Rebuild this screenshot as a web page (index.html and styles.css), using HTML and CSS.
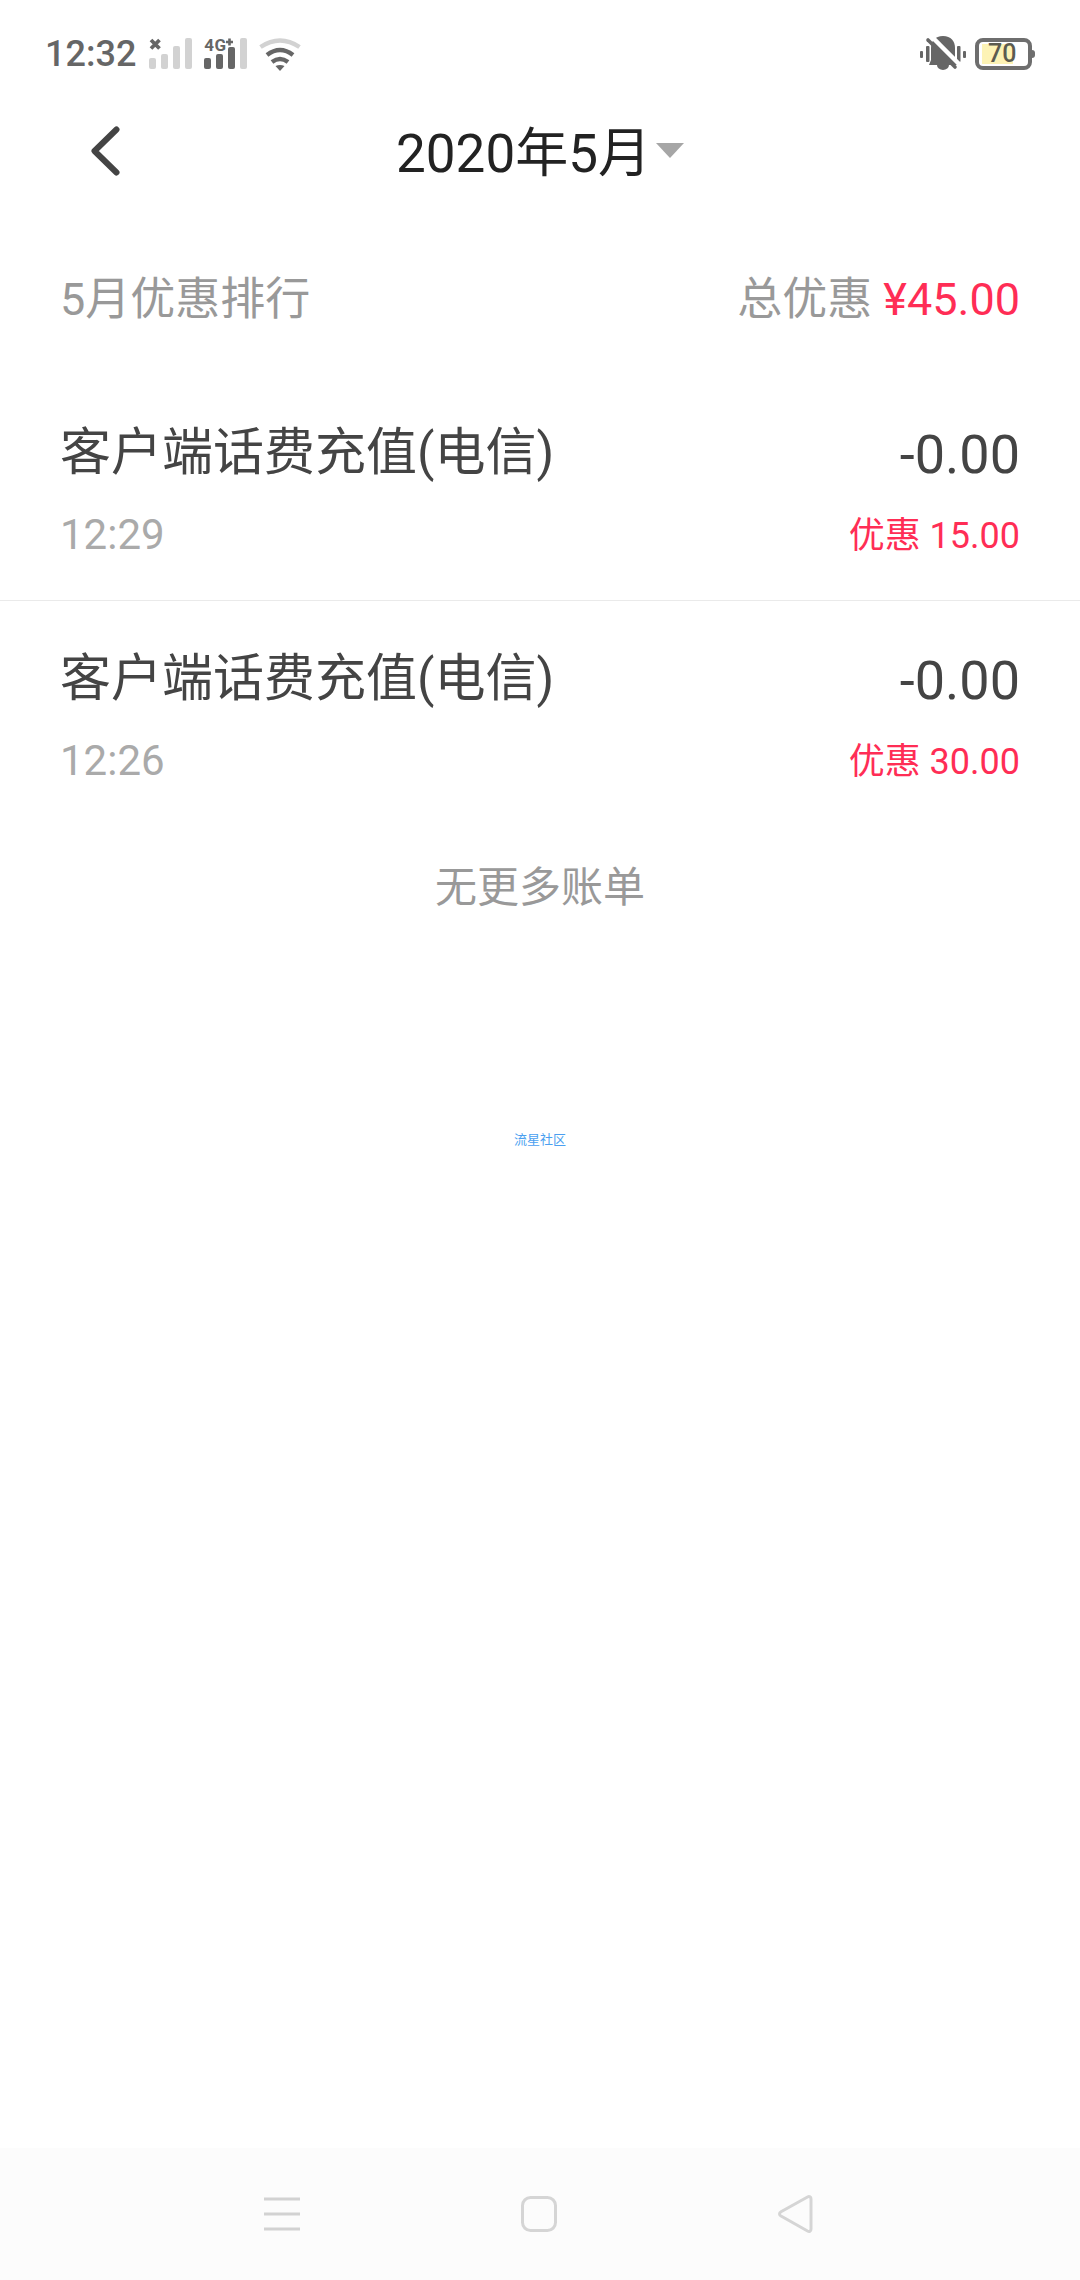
FILE: index.html
```html
<!DOCTYPE html>
<html lang="zh-CN">
<head>
  <meta charset="UTF-8">
  <meta name="viewport" content="width=device-width, initial-scale=1.0">
  <title>2020年5月</title>
  <link rel="stylesheet" href="styles.css">
</head>
<body>
  <div class="page">
    <div class="status-bar">
      <div class="status-left">
        <span class="status-time">12:32</span>
        <svg class="sig-one" width="46" height="32" viewBox="0 0 46 32">
          <path d="M2 2l8.500 8.500M10.500 2L2 10.500" stroke="#666" stroke-width="3.800" fill="none"/>
          <rect x="0" y="20" width="7" height="11" rx="2" fill="#d2d2d2"/>
          <rect x="12" y="16" width="7" height="15" rx="2" fill="#d2d2d2"/>
          <rect x="24" y="8" width="7" height="23" rx="2" fill="#d2d2d2"/>
          <rect x="36" y="0" width="7" height="31" rx="2" fill="#d2d2d2"/>
        </svg>
        <div class="sig-two">
          <span class="sig-label">4G</span>
          <svg width="46" height="32" viewBox="0 0 46 32">
            <path d="M22 4h7M25.500 0.500v7" stroke="#666" stroke-width="2.600"/>
            <rect x="0" y="20" width="7" height="11" rx="2" fill="#666"/>
            <rect x="12" y="16" width="7" height="15" rx="2" fill="#666"/>
            <rect x="24" y="9" width="7" height="22" rx="2" fill="#666"/>
            <rect x="36" y="0" width="7" height="31" rx="2" fill="#d2d2d2"/>
          </svg>
        </div>
        <svg class="wifi" width="42" height="34" viewBox="0 0 42 34">
          <path d="M1.500 10Q21-3 40.500 10" stroke="#d2d2d2" stroke-width="4.500" fill="none"/>
          <path d="M8 18Q21 8 34 18" stroke="#666" stroke-width="4.500" fill="none"/>
          <path d="M13 25Q21 19 29 25" stroke="#666" stroke-width="4.500" fill="none"/>
          <path d="M16.500 29Q21 27 25.500 29L21 34Z" fill="#666"/>
        </svg>
      </div>
      <div class="status-right">
        <svg width="46" height="36" viewBox="0 0 46 36">
          <rect x="0" y="15" width="3" height="7" rx="1" fill="#666"/>
          <rect x="6" y="10" width="3.500" height="16" rx="1" fill="#666"/>
          <rect x="37" y="10" width="3.500" height="16" rx="1" fill="#666"/>
          <rect x="43" y="15" width="3" height="7" rx="1" fill="#666"/>
          <path d="M23 0c8 0 12 5 12 12v12l2 5H9l2-5V12C11 5 15 0 23 0z" fill="#666"/>
          <path d="M17 29h12a6 5 0 0 1-12 0z" fill="#666"/>
          <path d="M11 0l29 29" stroke="#fff" stroke-width="4.500"/>
          <path d="M8 4l27 27" stroke="#666" stroke-width="3.600" stroke-linecap="round"/>
        </svg>
        <div class="battery">
          <div class="battery-body">
            <span class="battery-level">70</span>
          </div>
          <span class="battery-tip"></span>
        </div>
      </div>
    </div>

    <div class="title-bar">
      <svg class="back-icon" width="32" height="52" viewBox="0 0 32 52">
        <path d="M26.500 3.500L4.500 25l22 21.500" stroke="#444" stroke-width="6" fill="none" stroke-linecap="round" stroke-linejoin="round"/>
      </svg>
      <div class="month-picker">
        <span class="month-text">2020年5月</span>
        <span class="month-caret"></span>
      </div>
    </div>

    <div class="summary">
      <span class="summary-title">5月优惠排行</span>
      <span class="summary-total">总优惠 <em>¥45.00</em></span>
    </div>

    <div class="bill-list">
      <div class="bill-item">
        <div class="bill-row">
          <span class="bill-name">客户端话费充值(电信)</span>
          <span class="bill-amount">-0.00</span>
        </div>
        <div class="bill-row bill-sub">
          <span class="bill-time">12:29</span>
          <span class="bill-discount">优惠 15.00</span>
        </div>
      </div>
      <div class="bill-item">
        <div class="bill-row">
          <span class="bill-name">客户端话费充值(电信)</span>
          <span class="bill-amount">-0.00</span>
        </div>
        <div class="bill-row bill-sub">
          <span class="bill-time">12:26</span>
          <span class="bill-discount">优惠 30.00</span>
        </div>
      </div>
    </div>

    <div class="no-more">无更多账单</div>
    <div class="watermark">流星社区</div>

    <div class="nav-bar">
      <svg width="36" height="36" viewBox="0 0 36 36">
        <path d="M0 3h36M0 18h36M0 33h36" stroke="#d2d2d2" stroke-width="3"/>
      </svg>
      <svg width="36" height="36" viewBox="0 0 36 36">
        <rect x="1.500" y="1.500" width="33" height="33" rx="8" stroke="#d5d5d5" stroke-width="3" fill="none"/>
      </svg>
      <svg width="36" height="40" viewBox="0 0 36 40">
        <path d="M33 5v30c0 2-1.500 3-3.500 2L3 22c-2-1.200-2-3 0-4.200L29.500 3c2-1 3.500 0 3.500 2z" stroke="#d5d5d5" stroke-width="3" fill="none"/>
      </svg>
    </div>
  </div>
</body>
</html>
```

FILE: styles.css
```css
* {
  margin: 0;
  padding: 0;
  box-sizing: border-box;
}

body {
  font-family: Roboto, "Noto Sans CJK SC", sans-serif;
  background: #fff;
}

.page {
  width: 1080px;
  height: 2280px;
  display: flex;
  flex-direction: column;
  overflow: hidden;
}

.status-bar {
  height: 108px;
  padding: 0 45px;
  display: flex;
  align-items: center;
  justify-content: space-between;
}

.status-left {
  display: flex;
  align-items: center;
}

.status-time {
  font-size: 36px;
  font-weight: 500;
  color: #666;
  margin-right: 13px;
}

.sig-one {
  margin-right: 9px;
}

.sig-two {
  position: relative;
  margin-right: 9px;
  display: flex;
}

.sig-label {
  position: absolute;
  left: 0;
  top: 0;
  font-size: 17px;
  line-height: 15px;
  font-weight: 700;
  letter-spacing: 0.5px;
  color: #666;
}

.status-right {
  display: flex;
  align-items: center;
  gap: 9px;
}

.battery {
  display: flex;
  align-items: center;
}

.battery-body {
  width: 57px;
  height: 32px;
  border: 4px solid #6e6e6e;
  border-radius: 8px;
  padding: 2px 3px;
  display: flex;
}

.battery-level {
  width: 31px;
  padding-left: 6px;
  background: #fdf3b5;
  font-size: 25px;
  line-height: 20px;
  font-weight: 500;
  color: #5c5c50;
  white-space: nowrap;
}

.battery-tip {
  width: 3px;
  height: 8px;
  background: #6e6e6e;
  border-radius: 0 3px 3px 0;
}

.title-bar {
  height: 82px;
  position: relative;
  display: flex;
  align-items: center;
  justify-content: center;
}

.back-icon {
  position: absolute;
  left: 90px;
  top: 18px;
}

.month-picker {
  display: flex;
  align-items: center;
  gap: 5px;
}

.month-text {
  font-size: 53px;
  color: #222;
}

.month-caret {
  width: 0;
  height: 0;
  border-left: 14px solid transparent;
  border-right: 14px solid transparent;
  border-top: 15px solid #a6a6a6;
  margin-top: 2px;
}

.summary {
  margin-top: 65px;
  height: 80px;
  padding: 0 60px;
  display: flex;
  align-items: center;
  justify-content: space-between;
  font-size: 45px;
  color: #999;
}

.summary-total em {
  font-style: normal;
  color: #ff2d55;
}

.bill-list {
  margin-top: 45px;
}

.bill-item {
  height: 226px;
  padding: 41px 60px 0;
}

.bill-item:first-child {
  height: 221px;
  padding-top: 36px;
  border-bottom: 1px solid #eaeaea;
}

.bill-row {
  display: flex;
  align-items: center;
  justify-content: space-between;
  height: 72px;
}

.bill-sub {
  margin-top: 10px;
}

.bill-name {
  font-size: 51px;
  color: #444;
  margin-bottom: 8px;
}

.bill-amount {
  font-size: 54px;
  color: #444;
  margin-top: 5px;
}

.bill-time {
  font-size: 42px;
  color: #aaa;
}

.bill-discount {
  font-size: 36px;
  color: #ff2d55;
  margin-bottom: 5px;
}

.no-more {
  margin-top: 21px;
  height: 80px;
  line-height: 80px;
  text-align: center;
  font-size: 42px;
  color: #999;
}

.watermark {
  margin-top: 202px;
  text-align: center;
  font-size: 13px;
  line-height: 20px;
  color: #4b9ff0;
}

.nav-bar {
  margin-top: auto;
  height: 132px;
  background: #fcfcfc;
  padding: 0 266px 0 264px;
  display: flex;
  align-items: center;
  justify-content: space-between;
}
```
